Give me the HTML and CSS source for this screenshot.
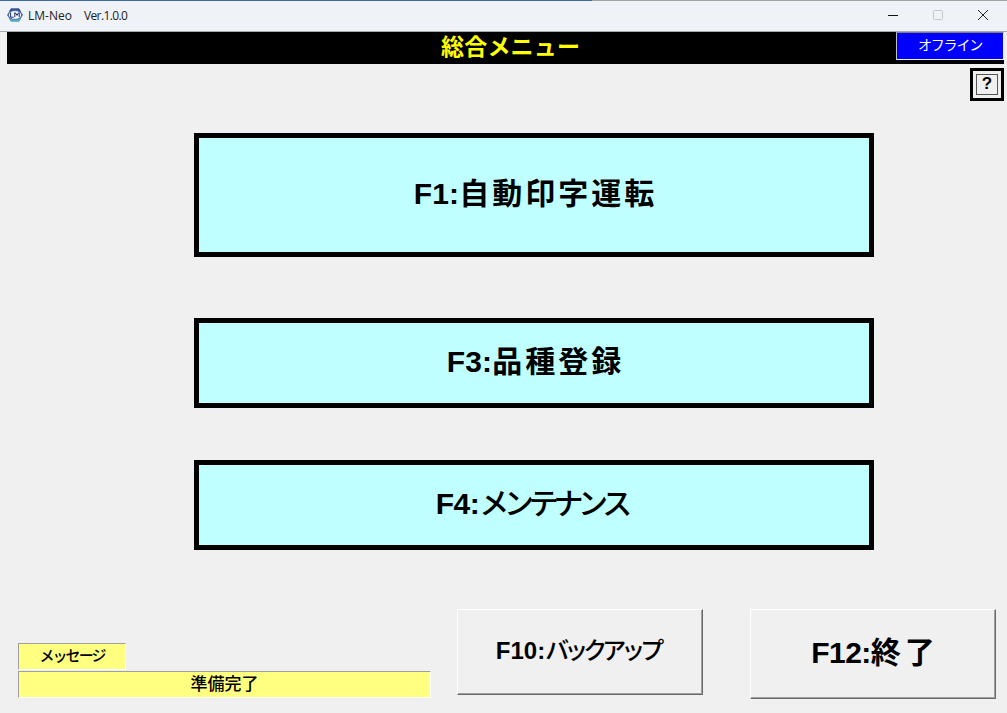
FILE: index.html
```html
<!DOCTYPE html>
<html lang="ja">
<head>
<meta charset="utf-8">
<title>LM-Neo</title>
<link rel="stylesheet" href="styles.css">
</head>
<body>
<div class="window">
  <header class="titlebar">
    <svg class="app-icon" width="16" height="16" viewBox="0 0 16 16">
      <path d="M4 1.5h8L16 8l-4 6.5H4L0 8z" fill="#4f74b8"/>
      <path d="M4 1.5h8l2 3H2z" fill="#2f4f8f"/>
      <path d="M2 11.5h12l-2 3H4z" fill="#4fb0c8"/>
      <ellipse cx="8" cy="8" rx="6.6" ry="4.4" fill="#f4f6fb" stroke="#3a4d88" stroke-width=".7"/>
      <path d="M3.6 5.6v4.6h3M7.8 10.2V5.8h.6l1.6 2.6 1.6-2.6h.6v4.4" fill="none" stroke="#1d2a66" stroke-width="1"/>
    </svg>
    <span class="app-title">LM-Neo<span class="app-version">Ver.1.0.0</span></span>
    <div class="win-controls">
      <svg class="win-btn" width="10" height="10" viewBox="0 0 10 10"><path d="M0 5.5h10" stroke="#111" stroke-width="1"/></svg>
      <svg class="win-btn" width="10" height="10" viewBox="0 0 10 10"><rect x=".5" y=".5" width="9" height="9" rx="1" fill="none" stroke="#c4c6ca"/></svg>
      <svg class="win-btn" width="10" height="10" viewBox="0 0 10 10"><path d="M0 0l10 10M10 0L0 10" stroke="#222" stroke-width="1"/></svg>
    </div>
  </header>
  <main class="client">
    <div class="banner">
      <h1 class="banner-title">総合メニュー</h1>
      <div class="status">オフライン</div>
    </div>
    <div class="help-row"><div class="help"><span class="help-inner">?</span></div></div>
    <nav class="menu">
      <button class="menu-btn menu-tall"><span class="key">F1:</span><span class="kanji">自動印字運転</span></button>
      <button class="menu-btn menu-short"><span class="key">F3:</span><span class="kanji">品種登録</span></button>
      <button class="menu-btn menu-short"><span class="key-tight">F4:</span><span class="kana">メンテナンス</span></button>
    </nav>
    <footer class="bottom">
      <div class="messages">
        <div class="msg msg-label">メッセージ</div>
        <div class="msg msg-text">準備完了</div>
      </div>
      <button class="sys-btn sys-backup">F10:<span class="kana-small">バックアップ</span></button>
      <button class="sys-btn sys-exit"><span class="key-exit">F12:</span><span class="kanji-exit">終了</span></button>
    </footer>
  </main>
</div>
</body>
</html>
```
FILE: styles.css
```css
* { box-sizing: border-box; }
html, body { margin: 0; height: 100%; }
body {
  width: 1007px;
  height: 713px;
  overflow: hidden;
  background: #f0f0f0;
  font-family: "Liberation Sans", "Noto Sans CJK JP", sans-serif;
  color: #000;
}
.window { display: flex; flex-direction: column; height: 713px; }
.titlebar {
  height: 32px;
  flex: none;
  display: flex;
  align-items: center;
  padding: 0 0 1px 7px;
  background:
    linear-gradient(to right, #3f6d9e 592px, #a6a6a6 592px) top / 100% 1px no-repeat,
    #eff3f8;
  border-bottom: 1px solid #a8a8a8;
}
.app-icon { flex: none; }
.app-title {
  margin-left: 5px;
  font: 12px "Open Sans", "Noto Sans", sans-serif;
  color: #222;
}
.app-version { margin-left: 12px; letter-spacing: -.6px; }
.win-controls { margin-left: auto; display: flex; align-items: center; gap: 35px; padding-right: 19px; }
.win-btn { width: 10px; height: 10px; }
.client { flex: 1; display: flex; flex-direction: column; padding: 0 3px 0 7px; }
.banner {
  height: 32px;
  flex: none;
  background: #000;
  display: flex;
  justify-content: flex-end;
  align-items: flex-start;
  position: relative;
}
.banner-title {
  position: absolute;
  left: 434px;
  top: 0;
  margin: 0;
  line-height: 31px;
  font-size: 23px;
  font-weight: 700;
  color: #ff0;
  letter-spacing: .2px;
  font-family: "Liberation Sans", "Noto Sans CJK JP", sans-serif;
}
.status {
  width: 108px;
  height: 28px;
  background: #00f;
  color: #fff;
  border: 1px solid #f0f0f0;
  border-top-color: #808080;
  border-left-color: #c0c0c0;
  font-size: 14px;
  letter-spacing: -1.2px;
  line-height: 25px;
  text-align: center;
}
.help-row { display: flex; justify-content: flex-end; padding: 4px 0 0; height: 33px; flex: none; }
.help {
  width: 34px;
  height: 33px;
  border: 3px solid #000;
  padding: 3px;
  background: #f0f0f0;
}
.help-inner {
  display: block;
  height: 21px;
  border: 1px solid #555;
  font: 700 17px/18px "Liberation Sans", sans-serif;
  text-align: center;
}
.menu { display: flex; flex-direction: column; align-items: flex-start; padding: 36px 0 0 187px; flex: none; }
.menu-btn {
  width: 680px;
  border: 5px solid #000;
  background: #bfffff;
  color: #000;
  padding: 0 0 8px;
  font-family: "Liberation Sans", "Noto Sans CJK JP", sans-serif;
  font-size: 30px;
  font-weight: 700;
}
.key { letter-spacing: .2px; }
.key-tight { letter-spacing: -.5px; }
.kanji { letter-spacing: 3px; margin-right: -3px; }
.kana { letter-spacing: -5.3px; margin-right: 5.3px; font-weight: 500; }
.menu-tall { height: 124px; margin-bottom: 61px; }
.menu-short { height: 90px; margin-bottom: 52px; }
.bottom { display: flex; align-items: flex-start; padding: 7px 0 0 11px; }
.messages { width: 413px; margin: 34px 26px 0 0; flex: none; }
.msg {
  background: #ffff80;
  border: 1px solid #fff;
  border-top-color: #a0a0a0;
  border-left-color: #a0a0a0;
  text-align: center;
}
.msg-label { width: 108px; height: 27px; line-height: 24px; margin-bottom: 1px; font-size: 15px; letter-spacing: -1.9px; font-weight: 500; }
.msg-text { height: 27px; line-height: 25px; font-size: 17px; font-weight: 500; }
.sys-btn {
  width: 246px;
  background: #f0f0f0;
  border: 1px solid;
  border-color: #fff #696969 #696969 #fff;
  box-shadow: inset -1px -1px 0 #a0a0a0;
  padding: 0 0 8px;
  color: #000;
  font-family: "Liberation Sans", "Noto Sans CJK JP", sans-serif;
  font-weight: 700;
}
.sys-backup { height: 86px; font-size: 24px; margin-right: 47px; }
.kana-small { letter-spacing: -5px; margin-right: 5px; font-weight: 500; }
.sys-exit { height: 90px; font-size: 30px; }
.key-exit { letter-spacing: -.5px; }
.kanji-exit { letter-spacing: 4px; margin-right: -4px; }
```
